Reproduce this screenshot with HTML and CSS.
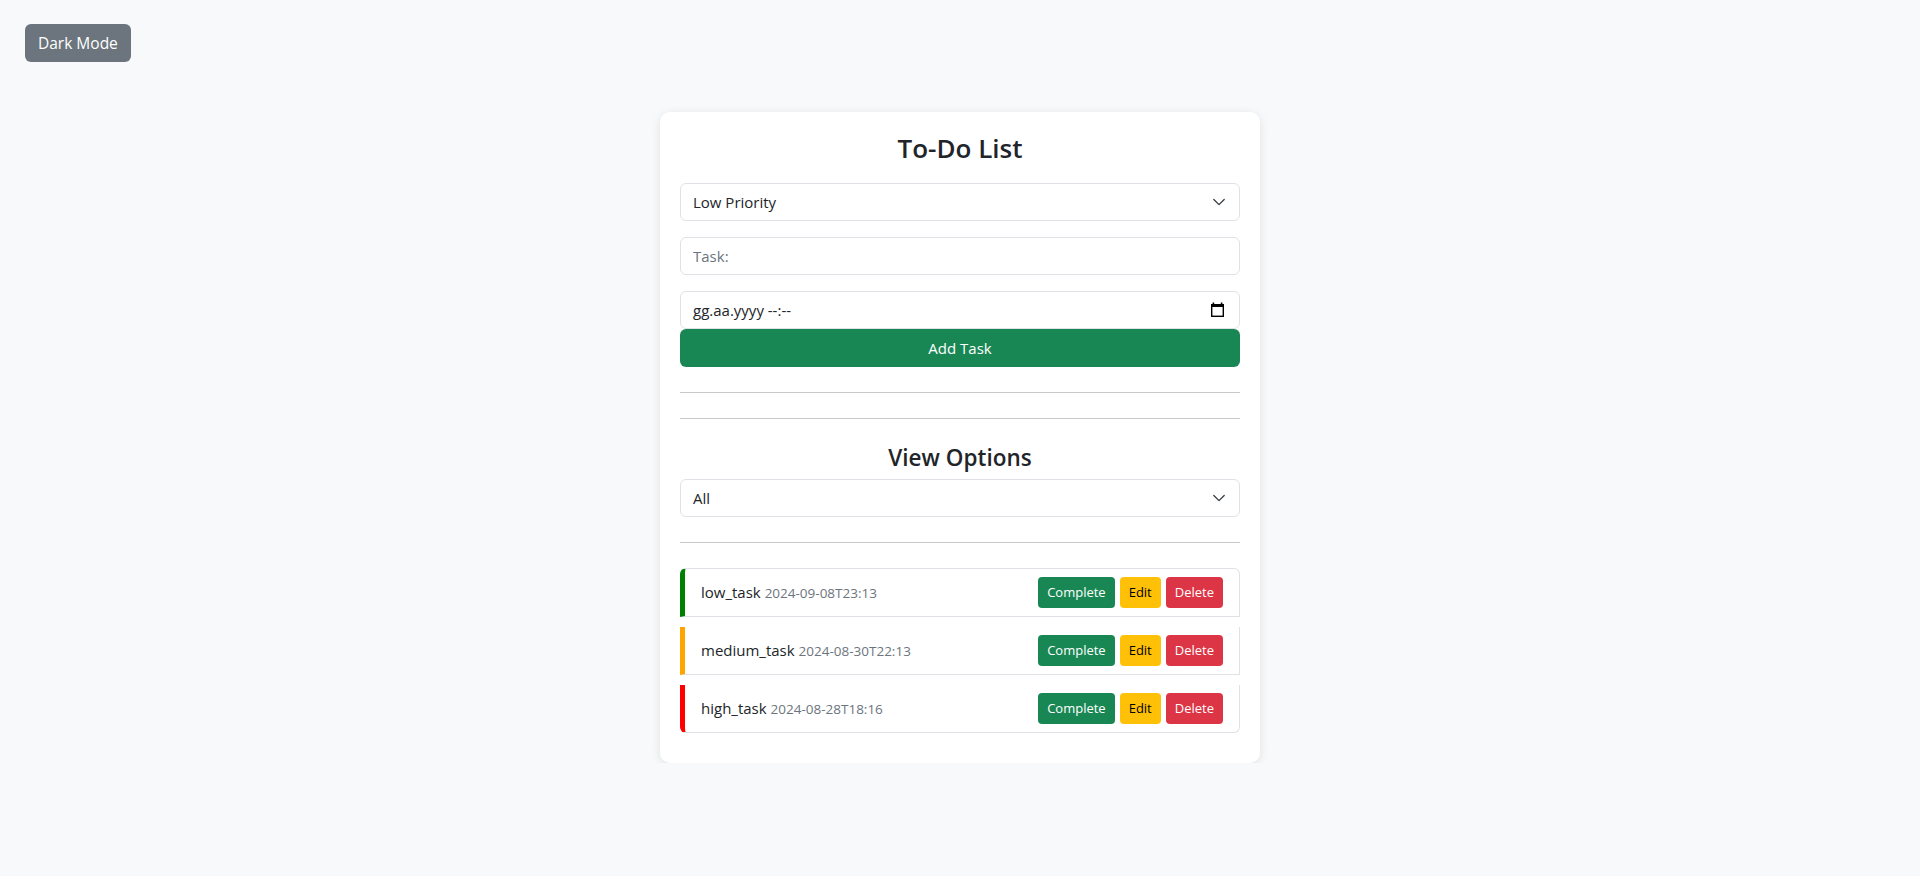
FILE: index.html
```html
<!DOCTYPE html>
<html lang="en">
<head>
<meta charset="utf-8">
<title>To-Do List</title>
<link rel="stylesheet" href="styles.css">
</head>
<body>
<div class="topbar">
  <button class="btn btn-theme" type="button">Dark Mode</button>
</div>
<main class="page">
  <div class="card">
    <h3 class="title">To-Do List</h3>
    <form class="task-form">
      <div class="field">
        <select class="form-select">
          <option>Low Priority</option>
          <option>Medium Priority</option>
          <option>High Priority</option>
        </select>
        <svg class="chev" width="16" height="12" viewBox="0 0 16 12"><path d="M2.8 3.5 L8 8.6 L13.2 3.5" fill="none" stroke="#343a40" stroke-width="1.3" stroke-linecap="round" stroke-linejoin="round"/></svg>
      </div>
      <div class="field">
        <input class="form-control" type="text" placeholder="Task:">
      </div>
      <div class="form-control date-input">
        <span>gg.aa.yyyy --:--</span>
        <svg class="cal" width="13" height="15" viewBox="0 0 13 15"><rect x="0.7" y="2.7" width="11.6" height="11.6" fill="none" stroke="#000" stroke-width="1.4"/><rect x="0" y="2" width="13" height="3" fill="#000"/><rect x="1.6" y="0.5" width="1.6" height="3" fill="#000"/><rect x="9.8" y="0.5" width="1.6" height="3" fill="#000"/></svg>
      </div>
      <button class="btn btn-add" type="button">Add Task</button>
    </form>
    <hr class="sep">
    <hr class="sep">
    <h4 class="subtitle">View Options</h4>
    <div class="field filter">
      <select class="form-select">
        <option>All</option>
        <option>Completed</option>
        <option>Pending</option>
      </select>
      <svg class="chev" width="16" height="12" viewBox="0 0 16 12"><path d="M2.8 3.5 L8 8.6 L13.2 3.5" fill="none" stroke="#343a40" stroke-width="1.3" stroke-linecap="round" stroke-linejoin="round"/></svg>
    </div>
    <hr class="sep">
    <ul class="task-list">
      <li class="task task-low">
        <span class="task-text"><span class="task-name">low_task</span> <span class="task-date">2024-09-08T23:13</span></span>
        <span class="actions">
          <button class="btn btn-sm btn-complete" type="button">Complete</button>
          <button class="btn btn-sm btn-edit" type="button">Edit</button>
          <button class="btn btn-sm btn-delete" type="button">Delete</button>
        </span>
      </li>
      <li class="task task-medium">
        <span class="task-text"><span class="task-name">medium_task</span> <span class="task-date">2024-08-30T22:13</span></span>
        <span class="actions">
          <button class="btn btn-sm btn-complete" type="button">Complete</button>
          <button class="btn btn-sm btn-edit" type="button">Edit</button>
          <button class="btn btn-sm btn-delete" type="button">Delete</button>
        </span>
      </li>
      <li class="task task-high">
        <span class="task-text"><span class="task-name">high_task</span> <span class="task-date">2024-08-28T18:16</span></span>
        <span class="actions">
          <button class="btn btn-sm btn-complete" type="button">Complete</button>
          <button class="btn btn-sm btn-edit" type="button">Edit</button>
          <button class="btn btn-sm btn-delete" type="button">Delete</button>
        </span>
      </li>
    </ul>
  </div>
</main>
</body>
</html>
```

FILE: styles.css
```css
body {
  margin: 0;
  background: #f8f9fa;
  font-family: "Open Sans", "Liberation Sans", sans-serif;
  color: #212529;
  font-size: 15px;
  line-height: 24px;
}

.topbar {
  display: flex;
  padding: 24px 0 0 25px;
}

.btn {
  font-family: inherit;
  border: 1px solid transparent;
  border-radius: 6px;
  cursor: pointer;
  box-sizing: border-box;
}

.btn-theme {
  background: #6c757d;
  color: #fff;
  font-size: 15.5px;
  line-height: 24px;
  padding: 6px 12px;
  height: 38px;
}

.page {
  display: flex;
  justify-content: center;
  padding-top: 50px;
}

.card {
  width: 600px;
  box-sizing: border-box;
  padding: 20px;
  background: #fff;
  border-radius: 10px;
  box-shadow: 0 2px 10px rgba(0, 0, 0, 0.1);
}

.title {
  margin: 0 0 17px;
  font-size: 26px;
  line-height: 33.6px;
  font-weight: 600;
  text-align: center;
}

.task-form {
  margin: 0;
}

.field {
  position: relative;
  margin-bottom: 16px;
}

.form-select,
.form-control {
  display: block;
  width: 100%;
  box-sizing: border-box;
  height: 38px;
  margin: 0;
  padding: 6px 12px;
  border: 1px solid #dee2e6;
  border-radius: 6px;
  font-family: "Open Sans", "Liberation Sans", sans-serif;
  font-size: 15px;
  line-height: 24px;
  color: #212529;
  background: #fff;
  appearance: none;
  -webkit-appearance: none;
  outline: none;
}

.form-select {
  padding-right: 36px;
}

.form-control::placeholder {
  color: #6c757d;
  opacity: 1;
}

.chev {
  position: absolute;
  right: 13px;
  top: 13px;
  pointer-events: none;
}

.date-input {
  display: flex;
  align-items: center;
  justify-content: space-between;
  padding-right: 15px;
}

.cal {
  display: block;
}

.btn-add {
  display: block;
  width: 100%;
  height: 38px;
  padding: 6px 12px;
  background: #198754;
  color: #fff;
  font-size: 15px;
  line-height: 24px;
}

.sep {
  border: 0;
  border-top: 1px solid rgba(33, 37, 41, 0.25);
  margin: 25px 0 0;
  height: 0;
}

.subtitle {
  margin: 25px 0 7px;
  font-size: 22.5px;
  line-height: 28.8px;
  font-weight: 600;
  text-align: center;
}

.filter {
  margin-bottom: 0;
}

.task-list {
  list-style: none;
  margin: 25px 0 0;
  padding: 0;
}

.task {
  display: flex;
  align-items: center;
  justify-content: space-between;
  padding: 8px 16px;
  border: 1px solid #dee2e6;
  border-left: 5px solid #dee2e6;
  margin-bottom: 10px;
  background: #fff;
}

.task + .task {
  border-top-width: 0;
}

.task:first-child {
  border-top-left-radius: 6px;
  border-top-right-radius: 6px;
}

.task:last-child {
  border-bottom-left-radius: 6px;
  border-bottom-right-radius: 6px;
}

.task-low { border-left-color: #008000; }
.task-medium { border-left-color: #ffa500; }
.task-high { border-left-color: #ff0000; }

.task-name {
  font-size: 15px;
}

.task-date {
  font-size: 13.5px;
  color: #6c757d;
}

.actions {
  display: flex;
  gap: 5px;
}

.btn-sm {
  height: 31px;
  padding: 4px 8px;
  font-size: 13px;
  line-height: 21px;
  border-radius: 4px;
}

.btn-complete { background: #198754; color: #fff; }
.btn-edit { background: #ffc107; color: #000; }
.btn-delete { background: #dc3545; color: #fff; }
```
